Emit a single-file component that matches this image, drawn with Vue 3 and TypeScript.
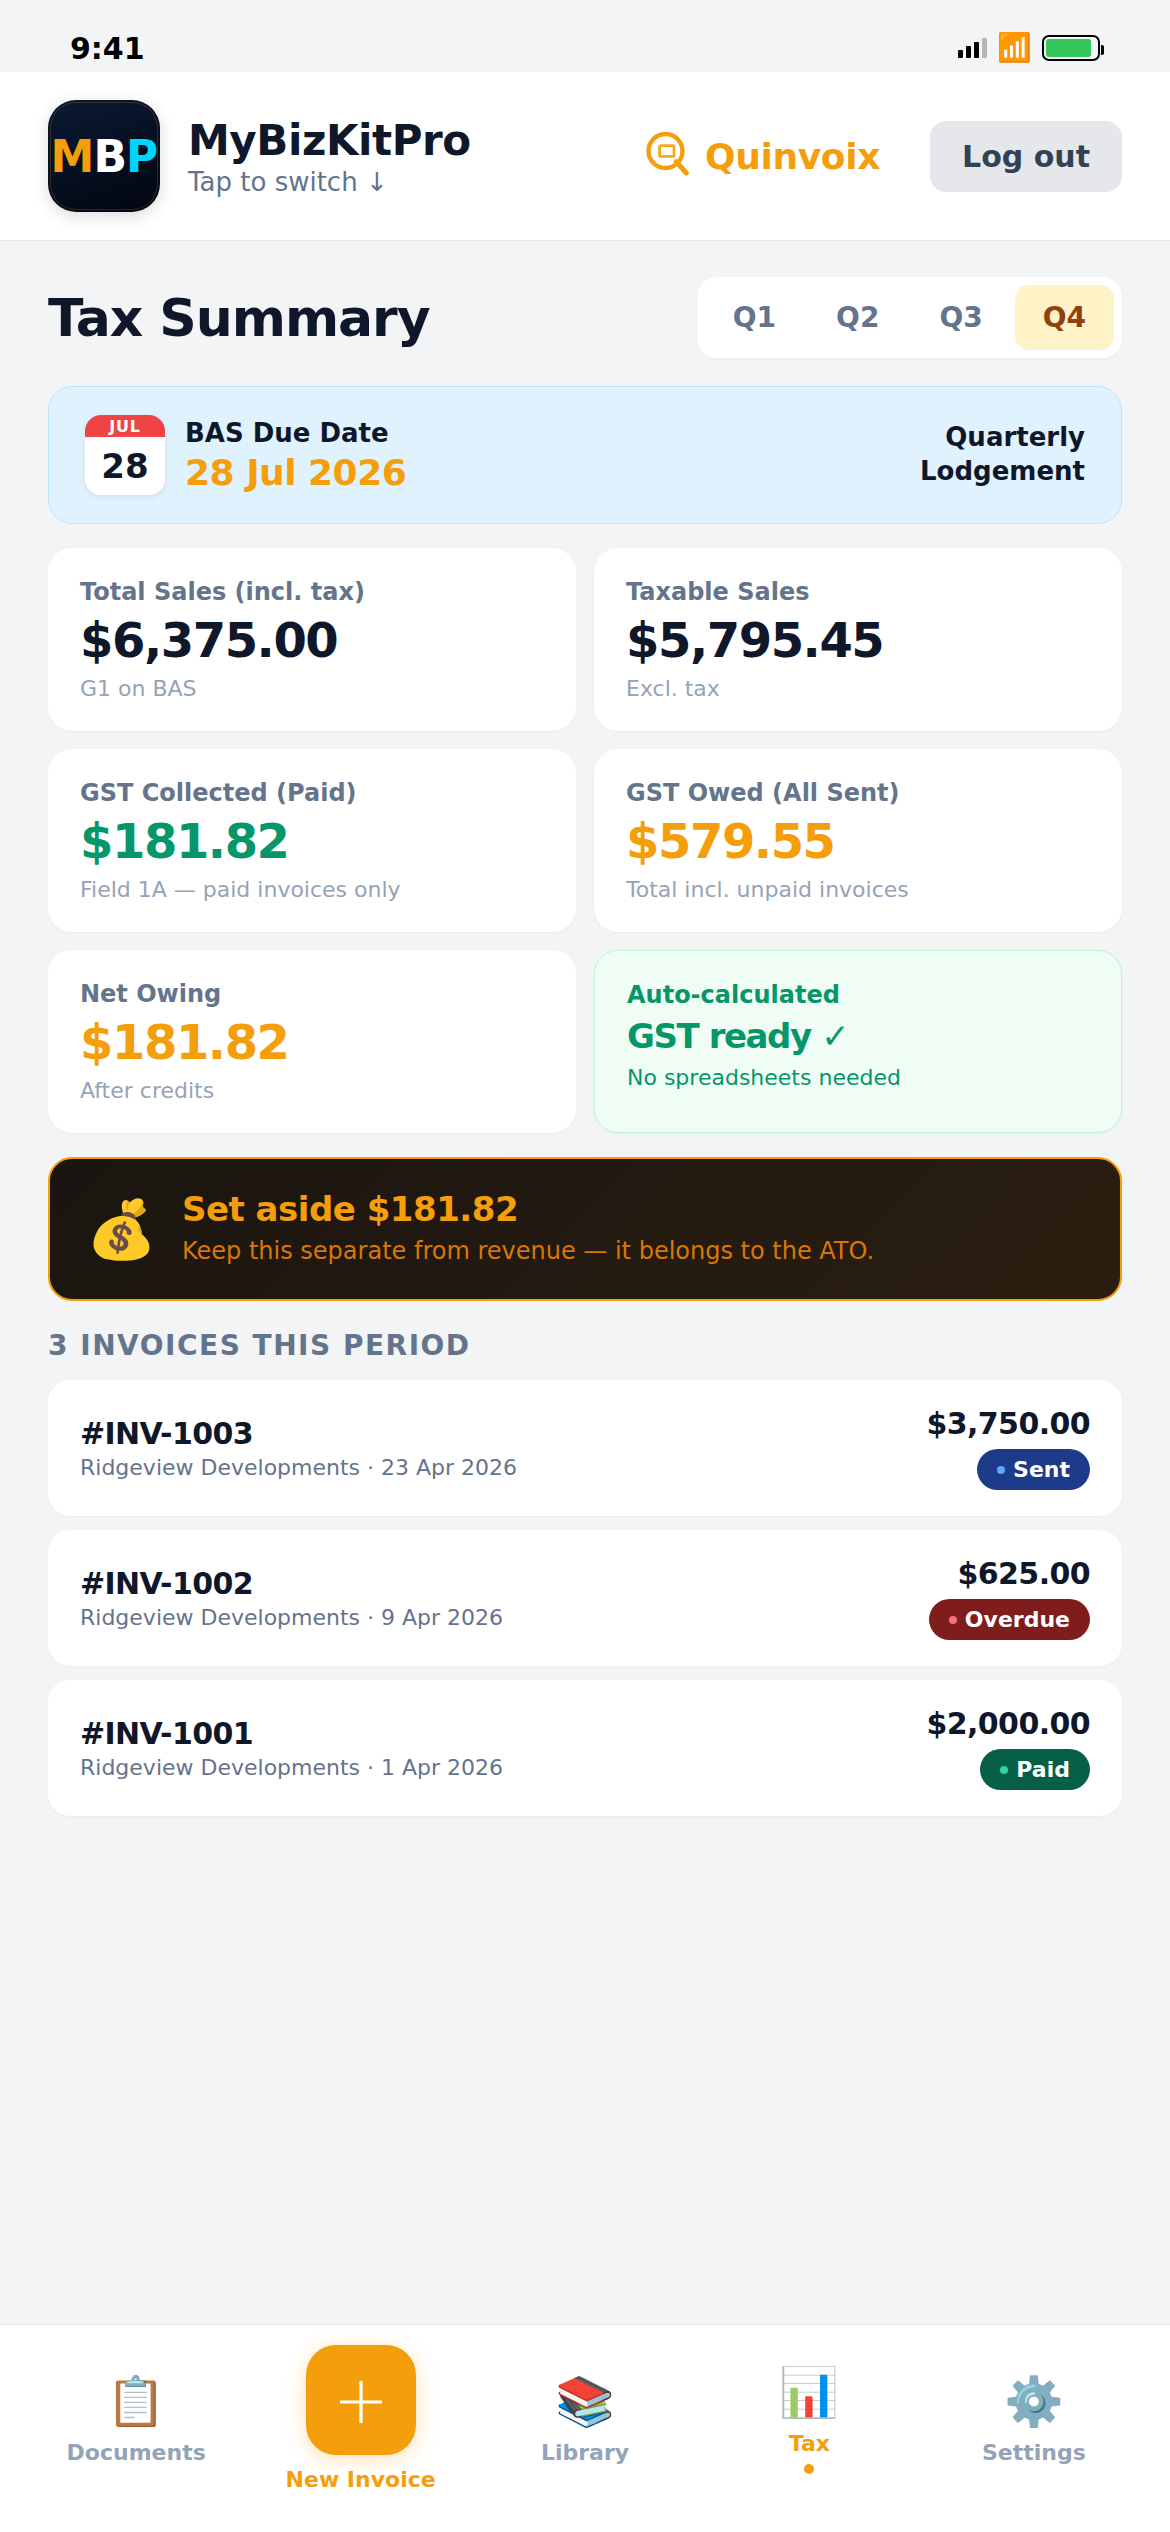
<script setup lang="ts">
import { ref } from 'vue'

interface Metric {
  label: string
  value: string
  note: string
  tone: 'ink' | 'green' | 'amber' | 'ready'
}

interface Invoice {
  id: string
  client: string
  date: string
  amount: string
  status: 'Sent' | 'Overdue' | 'Paid'
}

interface NavItem {
  label: string
  icon: string
  kind?: 'create' | 'active'
}

const quarters: string[] = ['Q1', 'Q2', 'Q3', 'Q4']
const quarter = ref('Q4')
const signalBars: number[] = [8, 12, 16, 20]

const metrics: Metric[] = [
  { label: 'Total Sales (incl. tax)', value: '$6,375.00', note: 'G1 on BAS', tone: 'ink' },
  { label: 'Taxable Sales', value: '$5,795.45', note: 'Excl. tax', tone: 'ink' },
  { label: 'GST Collected (Paid)', value: '$181.82', note: 'Field 1A — paid invoices only', tone: 'green' },
  { label: 'GST Owed (All Sent)', value: '$579.55', note: 'Total incl. unpaid invoices', tone: 'amber' },
  { label: 'Net Owing', value: '$181.82', note: 'After credits', tone: 'amber' },
  { label: 'Auto-calculated', value: 'GST ready ✓', note: 'No spreadsheets needed', tone: 'ready' },
]

const invoices: Invoice[] = [
  { id: '#INV-1003', client: 'Ridgeview Developments', date: '23 Apr 2026', amount: '$3,750.00', status: 'Sent' },
  { id: '#INV-1002', client: 'Ridgeview Developments', date: '9 Apr 2026', amount: '$625.00', status: 'Overdue' },
  { id: '#INV-1001', client: 'Ridgeview Developments', date: '1 Apr 2026', amount: '$2,000.00', status: 'Paid' },
]

const navItems: NavItem[] = [
  { label: 'Documents', icon: '📋' },
  { label: 'New Invoice', icon: '', kind: 'create' },
  { label: 'Library', icon: '📚' },
  { label: 'Tax', icon: '📊', kind: 'active' },
  { label: 'Settings', icon: '⚙️' },
]
</script>

<template>
  <div class="screen">
    <div class="status-bar">
      <span class="clock">9:41</span>
      <div class="status-icons">
        <div class="signal">
          <i v-for="h in signalBars" :key="h" :style="{ height: h + 'px' }"></i>
        </div>
        <span class="wifi">📶</span>
        <div class="battery"><div class="charge"></div></div>
      </div>
    </div>

    <header class="topbar">
      <div class="logo"><span class="m">M</span><span class="b">B</span><span class="p">P</span></div>
      <div class="business">
        <div class="business-name">MyBizKitPro</div>
        <div class="business-hint">Tap to switch ↓</div>
      </div>
      <div class="brand">
        <svg class="brand-icon" viewBox="0 0 48 48" fill="none" stroke="#f59e0b">
          <circle cx="20.5" cy="19" r="17" stroke-width="4.4" />
          <rect x="14.6" y="13.6" width="14.4" height="10.8" rx="1.2" stroke-width="2.8" opacity=".9" />
          <path d="M31.2 29.6 41.4 41" stroke-width="5" stroke-linecap="round" />
        </svg>
        <span>Quinvoix</span>
      </div>
      <button class="logout">Log out</button>
    </header>

    <main class="content">
      <div class="title-row">
        <h1>Tax Summary</h1>
        <div class="quarters">
          <button
            v-for="q in quarters"
            :key="q"
            :class="{ selected: q === quarter }"
            @click="quarter = q"
          >{{ q }}</button>
        </div>
      </div>

      <section class="due">
        <div class="calendar">
          <div class="month">JUL</div>
          <div class="day">28</div>
        </div>
        <div class="due-text">
          <div class="due-label">BAS Due Date</div>
          <div class="due-date">28 Jul 2026</div>
        </div>
        <div class="due-kind">Quarterly<br />Lodgement</div>
      </section>

      <section class="metrics">
        <div v-for="m in metrics" :key="m.label" class="metric" :class="m.tone">
          <div class="metric-label">{{ m.label }}</div>
          <div class="metric-value">{{ m.value }}</div>
          <div class="metric-note">{{ m.note }}</div>
        </div>
      </section>

      <section class="aside">
        <span class="bag">💰</span>
        <div>
          <div class="aside-title">Set aside $181.82</div>
          <div class="aside-note">Keep this separate from revenue — it belongs to the ATO.</div>
        </div>
      </section>

      <h2>3 INVOICES THIS PERIOD</h2>

      <section class="invoices">
        <div v-for="inv in invoices" :key="inv.id" class="invoice">
          <div>
            <div class="invoice-id">{{ inv.id }}</div>
            <div class="invoice-meta">{{ inv.client }} · {{ inv.date }}</div>
          </div>
          <div class="invoice-right">
            <div class="invoice-amount">{{ inv.amount }}</div>
            <div class="badge" :class="inv.status.toLowerCase()"><i></i>{{ inv.status }}</div>
          </div>
        </div>
      </section>
    </main>

    <nav class="nav">
      <div v-for="item in navItems" :key="item.label" class="nav-item" :class="item.kind">
        <div v-if="item.kind === 'create'" class="create-button">
          <svg width="42" height="42" viewBox="0 0 42 42" stroke="#fff" stroke-width="3.2">
            <path d="M21 0V42M0 21H42" />
          </svg>
        </div>
        <div v-else class="nav-icon">{{ item.icon }}</div>
        <div class="nav-label">{{ item.label }}</div>
        <div v-if="item.kind === 'active'" class="nav-dot"></div>
      </div>
    </nav>
  </div>
</template>

<style>
html,
body {
  margin: 0;
  background: #f3f4f6;
}
</style>

<style scoped>
.screen {
  width: 1170px;
  height: 2532px;
  display: flex;
  flex-direction: column;
  background: #f3f4f6;
  color: #0f172a;
  font-family: 'DejaVu Sans', 'Noto Color Emoji', sans-serif;
  overflow: hidden;
}
.screen * {
  box-sizing: border-box;
}
button {
  border: 0;
  margin: 0;
  font: inherit;
  line-height: normal;
}

/* Status bar */
.status-bar {
  height: 72px;
  flex: none;
  padding: 24px 70px 0;
  display: flex;
  align-items: center;
  justify-content: space-between;
  color: #000;
}
.clock {
  font-size: 30px;
  font-weight: 700;
}
.status-icons {
  display: flex;
  align-items: center;
  gap: 10px;
}
.signal {
  display: flex;
  align-items: flex-end;
  gap: 3px;
}
.signal i {
  width: 5px;
  border-radius: 1px;
  background: #000;
}
.signal i:last-child {
  opacity: .25;
}
.wifi {
  font-size: 28px;
  line-height: 32px;
}
.battery {
  position: relative;
  width: 58px;
  height: 26px;
  padding: 2px;
  border: 2px solid #000;
  border-radius: 7px;
}
.battery::after {
  content: '';
  position: absolute;
  right: -6px;
  top: 8px;
  width: 3px;
  height: 10px;
  border-radius: 0 2px 2px 0;
  background: #000;
}
.charge {
  width: 90%;
  height: 100%;
  border-radius: 3px;
  background: #34c759;
}

/* Header */
.topbar {
  flex: none;
  display: flex;
  align-items: center;
  padding: 28px 48px;
  background: #fff;
  border-bottom: 1px solid #e5e7eb;
}
.logo {
  position: relative;
  width: 112px;
  height: 112px;
  display: flex;
  align-items: center;
  justify-content: center;
  border-radius: 28px;
  background: linear-gradient(160deg, #0a1a33, #02060f);
  box-shadow: 0 4px 16px rgba(0, 0, 0, .15);
  font-size: 44px;
  font-weight: 700;
  letter-spacing: -.02em;
}
.logo::after {
  content: '';
  position: absolute;
  inset: 2px;
  border: 1px solid rgba(245, 158, 11, .2);
  border-radius: 26px;
}
.m { color: #f59e0b; }
.b { color: #fff; }
.p { color: #00d4ff; }
.business {
  margin-left: 28px;
  flex: 1;
}
.business-name {
  font-size: 42px;
  font-weight: 700;
  letter-spacing: -.01em;
}
.business-hint {
  margin-top: 2px;
  font-size: 26px;
  color: #64748b;
}
.brand {
  display: flex;
  align-items: center;
  gap: 12px;
  margin-right: 50px;
  font-size: 36px;
  font-weight: 700;
  letter-spacing: -.01em;
  color: #f59e0b;
}
.brand-icon {
  width: 48px;
  height: 48px;
}
.logout {
  padding: 18px 32px;
  border-radius: 16px;
  background: #e5e7eb;
  color: #334155;
  font-size: 30px;
  font-weight: 700;
}

/* Content */
.content {
  flex: 1;
  padding: 36px 48px 0;
}
.title-row {
  display: flex;
  align-items: center;
  justify-content: space-between;
}
h1 {
  margin: 0;
  font-size: 52px;
  font-weight: 700;
  letter-spacing: -.02em;
}
.quarters {
  display: flex;
  gap: 4px;
  padding: 8px;
  border-radius: 20px;
  background: #fff;
  box-shadow: 0 1px 3px rgba(0, 0, 0, .04);
}
.quarters button {
  padding: 16px 28px;
  border-radius: 14px;
  background: transparent;
  color: #64748b;
  font-size: 28px;
  font-weight: 700;
}
.quarters .selected {
  background: #fef3c7;
  color: #92400e;
}

.due {
  margin-top: 28px;
  display: flex;
  align-items: center;
  padding: 28px 36px;
  border: 1px solid #bae6fd;
  border-radius: 24px;
  background: #e0f2fe;
}
.calendar {
  width: 80px;
  height: 80px;
  display: flex;
  flex-direction: column;
  border-radius: 16px;
  overflow: hidden;
  background: #fff;
  box-shadow: 0 2px 6px rgba(0, 0, 0, .08);
  text-align: center;
}
.month {
  height: 22px;
  background: #ef4444;
  color: #fff;
  font-size: 16px;
  line-height: 24px;
  font-weight: 700;
  letter-spacing: .05em;
}
.day {
  flex: 1;
  display: flex;
  align-items: center;
  justify-content: center;
  font-size: 34px;
  font-weight: 700;
}
.due-text {
  flex: 1;
  margin-left: 20px;
  font-weight: 700;
}
.due-label {
  font-size: 26px;
}
.due-date {
  margin-top: 4px;
  font-size: 36px;
  letter-spacing: -.5px;
  color: #f59e0b;
}
.due-kind {
  font-size: 26px;
  line-height: 1.3;
  font-weight: 700;
  text-align: right;
}

.metrics {
  margin-top: 24px;
  display: grid;
  grid-template-columns: 1fr 1fr;
  grid-auto-rows: 183px;
  gap: 18px;
}
.metric {
  padding: 30px 32px;
  border-radius: 24px;
  background: #fff;
  box-shadow: 0 1px 3px rgba(0, 0, 0, .04);
}
.metric-label {
  font-size: 24px;
  font-weight: 700;
  color: #64748b;
}
.metric-value {
  margin: 6px 0 8px;
  font-size: 48px;
  font-weight: 700;
  letter-spacing: -.03em;
}
.metric-note {
  font-size: 22px;
  color: #94a3b8;
}
.green .metric-value { color: #059669; }
.amber .metric-value { color: #f59e0b; }
.ready {
  border: 1px solid #bbf7d0;
  background: #f0fdf4;
}
.ready > div {
  color: #059669;
}
.ready .metric-value {
  font-size: 34px;
  line-height: 42px;
  letter-spacing: -1.44px;
}

.aside {
  margin-top: 24px;
  height: 144px;
  display: flex;
  align-items: center;
  gap: 25px;
  padding: 0 36px;
  border: 2px solid #f59e0b;
  border-radius: 24px;
  background: linear-gradient(135deg, #1a1510, #2b1e10);
}
.bag {
  font-size: 57px;
  line-height: 68px;
}
.aside-title {
  font-size: 34px;
  font-weight: 700;
  letter-spacing: -.5px;
  color: #f59e0b;
}
.aside-note {
  margin: 8px 0 4px;
  font-size: 24px;
  color: #d97706;
}

h2 {
  margin: 28px 0 18px;
  font-size: 28px;
  font-weight: 700;
  letter-spacing: 1.5px;
  color: #64748b;
}

.invoices {
  display: flex;
  flex-direction: column;
  gap: 14px;
}
.invoice {
  height: 136px;
  display: flex;
  align-items: center;
  justify-content: space-between;
  padding: 0 32px;
  border-radius: 22px;
  background: #fff;
  box-shadow: 0 1px 3px rgba(0, 0, 0, .04);
}
.invoice-id,
.invoice-amount {
  font-size: 30px;
  font-weight: 700;
  letter-spacing: -.02em;
}
.invoice-meta {
  margin-top: 4px;
  font-size: 22px;
  color: #64748b;
}
.invoice-right {
  display: flex;
  flex-direction: column;
  align-items: flex-end;
  gap: 8px;
}
.badge {
  display: flex;
  align-items: center;
  gap: 8px;
  padding: 8px 20px;
  border-radius: 21px;
  color: #fff;
  font-size: 22px;
  font-weight: 700;
}
.badge i {
  width: 8px;
  height: 8px;
  border-radius: 50%;
}
.sent { background: #1e3a8a; }
.sent i { background: #60a5fa; }
.overdue { background: #7f1d1d; }
.overdue i { background: #f87171; }
.paid { background: #065f46; }
.paid i { background: #34d399; }

/* Bottom navigation */
.nav {
  flex: none;
  height: 208px;
  display: flex;
  padding: 20px 24px 40px;
  background: #fff;
  border-top: 1px solid #e5e7eb;
}
.nav-item {
  flex: 1;
  display: flex;
  flex-direction: column;
  align-items: center;
  justify-content: center;
}
.nav-icon {
  height: 56px;
  font-size: 48px;
  line-height: 58px;
}
.nav-label {
  margin-top: 12px;
  font-size: 22px;
  font-weight: 700;
  color: #94a3b8;
}
.create .nav-label,
.active .nav-label {
  color: #f59e0b;
}
.create-button {
  width: 110px;
  height: 110px;
  display: flex;
  align-items: center;
  justify-content: center;
  border-radius: 30px;
  background: #f59e0b;
  box-shadow: 0 4px 20px rgba(245, 158, 11, .3);
}
.create-button svg {
  position: relative;
  top: 2px;
}
.nav-dot {
  width: 10px;
  height: 10px;
  margin-top: 8px;
  border-radius: 50%;
  background: #f59e0b;
}
</style>
